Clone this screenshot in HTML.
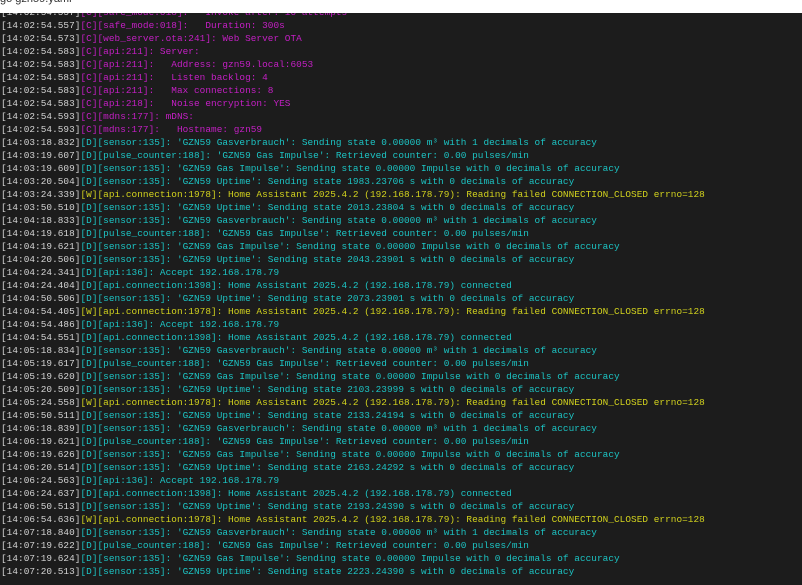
<!DOCTYPE html>
<html><head><meta charset="utf-8"><style>
html,body{margin:0;padding:0;width:802px;height:585px;overflow:hidden;background:#1c1c1c;}
#hdr{position:absolute;left:0;top:0;width:802px;height:13px;background:#fff;z-index:2;overflow:hidden;}
#hdr span{position:absolute;left:0;top:-7px;font:11px "Liberation Sans",sans-serif;color:#333;}
#log{position:absolute;left:1px;top:5.5px;font-family:"Liberation Mono",monospace;font-size:9.4px;letter-spacing:0.05px;line-height:13.02px;white-space:pre;color:#d4d4d4;}
.c{color:#c51fc5}.d{color:#1cc4c4}.w{color:#d2d21e}
</style></head><body>
<div id="hdr"><span>go gzn59.yaml</span></div>
<div id="log">[14:02:54.557]<span class="c">[C][safe_mode:018]:   Invoke after: 10 attempts</span>
[14:02:54.557]<span class="c">[C][safe_mode:018]:   Duration: 300s</span>
[14:02:54.573]<span class="c">[C][web_server.ota:241]: Web Server OTA</span>
[14:02:54.583]<span class="c">[C][api:211]: Server:</span>
[14:02:54.583]<span class="c">[C][api:211]:   Address: gzn59.local:6053</span>
[14:02:54.583]<span class="c">[C][api:211]:   Listen backlog: 4</span>
[14:02:54.583]<span class="c">[C][api:211]:   Max connections: 8</span>
[14:02:54.583]<span class="c">[C][api:218]:   Noise encryption: YES</span>
[14:02:54.593]<span class="c">[C][mdns:177]: mDNS:</span>
[14:02:54.593]<span class="c">[C][mdns:177]:   Hostname: gzn59</span>
[14:03:18.832]<span class="d">[D][sensor:135]: 'GZN59 Gasverbrauch': Sending state 0.00000 m³ with 1 decimals of accuracy</span>
[14:03:19.607]<span class="d">[D][pulse_counter:188]: 'GZN59 Gas Impulse': Retrieved counter: 0.00 pulses/min</span>
[14:03:19.609]<span class="d">[D][sensor:135]: 'GZN59 Gas Impulse': Sending state 0.00000 Impulse with 0 decimals of accuracy</span>
[14:03:20.504]<span class="d">[D][sensor:135]: 'GZN59 Uptime': Sending state 1983.23706 s with 0 decimals of accuracy</span>
[14:03:24.339]<span class="w">[W][api.connection:1978]: Home Assistant 2025.4.2 (192.168.178.79): Reading failed CONNECTION_CLOSED errno=128</span>
[14:03:50.510]<span class="d">[D][sensor:135]: 'GZN59 Uptime': Sending state 2013.23804 s with 0 decimals of accuracy</span>
[14:04:18.833]<span class="d">[D][sensor:135]: 'GZN59 Gasverbrauch': Sending state 0.00000 m³ with 1 decimals of accuracy</span>
[14:04:19.618]<span class="d">[D][pulse_counter:188]: 'GZN59 Gas Impulse': Retrieved counter: 0.00 pulses/min</span>
[14:04:19.621]<span class="d">[D][sensor:135]: 'GZN59 Gas Impulse': Sending state 0.00000 Impulse with 0 decimals of accuracy</span>
[14:04:20.506]<span class="d">[D][sensor:135]: 'GZN59 Uptime': Sending state 2043.23901 s with 0 decimals of accuracy</span>
[14:04:24.341]<span class="d">[D][api:136]: Accept 192.168.178.79</span>
[14:04:24.404]<span class="d">[D][api.connection:1398]: Home Assistant 2025.4.2 (192.168.178.79) connected</span>
[14:04:50.506]<span class="d">[D][sensor:135]: 'GZN59 Uptime': Sending state 2073.23901 s with 0 decimals of accuracy</span>
[14:04:54.405]<span class="w">[W][api.connection:1978]: Home Assistant 2025.4.2 (192.168.178.79): Reading failed CONNECTION_CLOSED errno=128</span>
[14:04:54.486]<span class="d">[D][api:136]: Accept 192.168.178.79</span>
[14:04:54.551]<span class="d">[D][api.connection:1398]: Home Assistant 2025.4.2 (192.168.178.79) connected</span>
[14:05:18.834]<span class="d">[D][sensor:135]: 'GZN59 Gasverbrauch': Sending state 0.00000 m³ with 1 decimals of accuracy</span>
[14:05:19.617]<span class="d">[D][pulse_counter:188]: 'GZN59 Gas Impulse': Retrieved counter: 0.00 pulses/min</span>
[14:05:19.620]<span class="d">[D][sensor:135]: 'GZN59 Gas Impulse': Sending state 0.00000 Impulse with 0 decimals of accuracy</span>
[14:05:20.509]<span class="d">[D][sensor:135]: 'GZN59 Uptime': Sending state 2103.23999 s with 0 decimals of accuracy</span>
[14:05:24.558]<span class="w">[W][api.connection:1978]: Home Assistant 2025.4.2 (192.168.178.79): Reading failed CONNECTION_CLOSED errno=128</span>
[14:05:50.511]<span class="d">[D][sensor:135]: 'GZN59 Uptime': Sending state 2133.24194 s with 0 decimals of accuracy</span>
[14:06:18.839]<span class="d">[D][sensor:135]: 'GZN59 Gasverbrauch': Sending state 0.00000 m³ with 1 decimals of accuracy</span>
[14:06:19.621]<span class="d">[D][pulse_counter:188]: 'GZN59 Gas Impulse': Retrieved counter: 0.00 pulses/min</span>
[14:06:19.626]<span class="d">[D][sensor:135]: 'GZN59 Gas Impulse': Sending state 0.00000 Impulse with 0 decimals of accuracy</span>
[14:06:20.514]<span class="d">[D][sensor:135]: 'GZN59 Uptime': Sending state 2163.24292 s with 0 decimals of accuracy</span>
[14:06:24.563]<span class="d">[D][api:136]: Accept 192.168.178.79</span>
[14:06:24.637]<span class="d">[D][api.connection:1398]: Home Assistant 2025.4.2 (192.168.178.79) connected</span>
[14:06:50.513]<span class="d">[D][sensor:135]: 'GZN59 Uptime': Sending state 2193.24390 s with 0 decimals of accuracy</span>
[14:06:54.636]<span class="w">[W][api.connection:1978]: Home Assistant 2025.4.2 (192.168.178.79): Reading failed CONNECTION_CLOSED errno=128</span>
[14:07:18.840]<span class="d">[D][sensor:135]: 'GZN59 Gasverbrauch': Sending state 0.00000 m³ with 1 decimals of accuracy</span>
[14:07:19.622]<span class="d">[D][pulse_counter:188]: 'GZN59 Gas Impulse': Retrieved counter: 0.00 pulses/min</span>
[14:07:19.624]<span class="d">[D][sensor:135]: 'GZN59 Gas Impulse': Sending state 0.00000 Impulse with 0 decimals of accuracy</span>
[14:07:20.513]<span class="d">[D][sensor:135]: 'GZN59 Uptime': Sending state 2223.24390 s with 0 decimals of accuracy</span></div>
</body></html>
